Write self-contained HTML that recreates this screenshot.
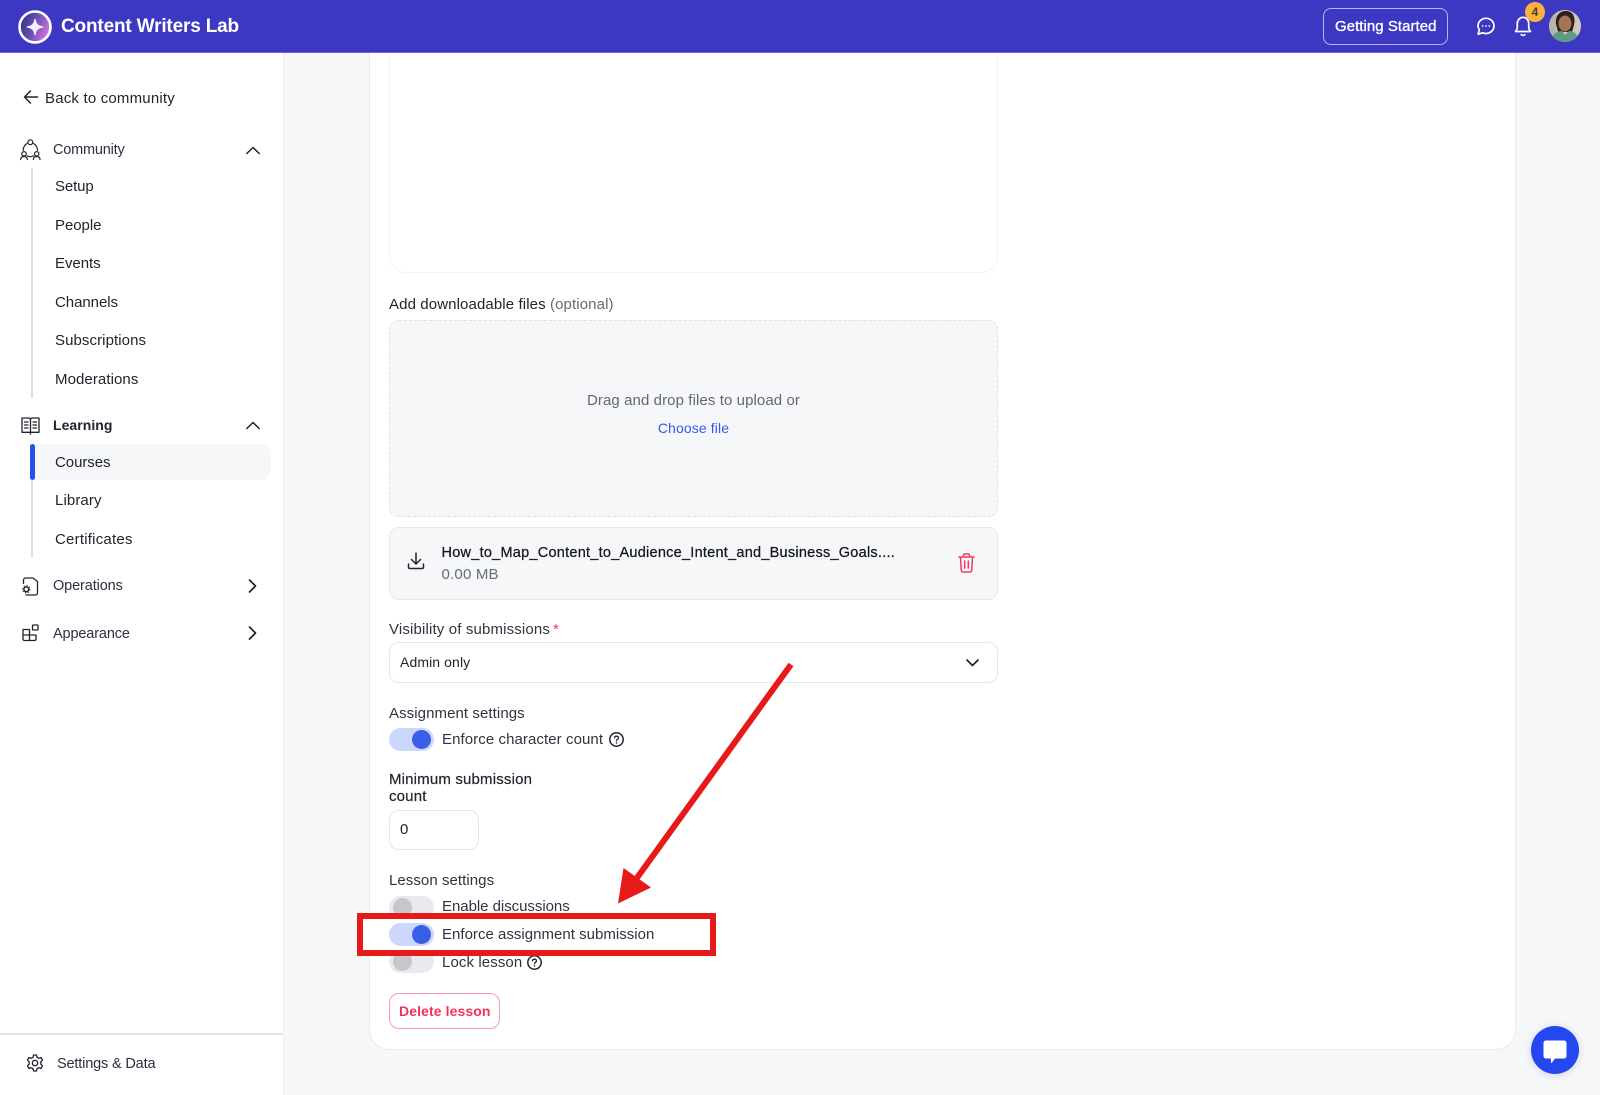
<!DOCTYPE html>
<html lang="en">
<head>
<meta charset="utf-8">
<title>Content Writers Lab</title>
<style>
html,body{margin:0;padding:0;width:1600px;height:1095px;overflow:hidden;background:#f6f7f9;font-family:"Liberation Sans",sans-serif;color:#20242e}
*{box-sizing:border-box}
.a{position:absolute}
.t{position:absolute;white-space:nowrap;transform:translateY(-50%);font-size:15px;line-height:18px;letter-spacing:0}
svg{position:absolute;overflow:visible}
.s{fill:none;stroke:#20242e;stroke-width:1.5;stroke-linecap:round;stroke-linejoin:round}
.w{fill:none;stroke:#fff;stroke-width:1.7;stroke-linecap:round;stroke-linejoin:round}
.tr{position:absolute;left:389px;width:45px;height:23px;border-radius:12px}
.on{background:#ccd7fd}.off{background:#e9eaee}
.k{position:absolute;top:2px;width:19px;height:19px;border-radius:50%}
.on .k{left:23px;background:#3a5fe6}.off .k{left:4px;background:#c6c7cd}
</style>
</head>
<body>
<!-- sidebar -->
<div class="a" style="left:0;top:53px;width:284px;height:1042px;background:#fff;border-right:1px solid #eceef1"></div>
<svg style="left:23px;top:89px" width="16" height="16" viewBox="0 0 16 16"><path class="s" d="M14.500 8H1.800M7.500 2 1.500 8 7.500 14"/></svg>
<div class="t" style="left:45px;top:98.500px;letter-spacing:.19px">Back to community</div>

<svg style="left:20px;top:139px" width="22" height="22" viewBox="0 0 22 22"><g class="s" style="stroke-width:1.200"><circle cx="10.300" cy="3.200" r="2.400"/><circle cx="4" cy="14.800" r="2.200"/><circle cx="16.700" cy="14.800" r="2.200"/><path d="M.7 20.500C.7 18.500 2 17.500 4 17.500S7.300 18.500 7.300 20.500M13.400 20.500C13.400 18.500 14.700 17.500 16.700 17.500S20 18.500 20 20.500M7 4.500C4.500 6 3 8.800 3.200 11.300M13.600 4.500C16 6 17.600 8.800 17.500 11.300M7.300 16.800C9 18 11.600 18 13.300 16.800"/></g></svg>
<div class="t" style="left:53px;top:150px;font-size:14.500px;letter-spacing:-.2px;color:#2b3040">Community</div>
<svg style="left:246px;top:146px" width="14" height="9" viewBox="0 0 14 9"><path class="s" d="M.8 7.500 7 1.500 13.200 7.500"/></svg>

<div class="a" style="left:30.500px;top:168px;width:2px;height:230px;background:#dedcdc"></div>
<div class="t" style="left:55px;top:186.500px;letter-spacing:-.11px">Setup</div>
<div class="t" style="left:55px;top:226px;letter-spacing:-.05px">People</div>
<div class="t" style="left:55px;top:263.500px;letter-spacing:-.05px">Events</div>
<div class="t" style="left:55px;top:302.500px;letter-spacing:-.05px">Channels</div>
<div class="t" style="left:55px;top:340.500px;letter-spacing:.08px">Subscriptions</div>
<div class="t" style="left:55px;top:380px;letter-spacing:.08px">Moderations</div>

<svg style="left:21px;top:417px" width="19" height="18" viewBox="0 0 19 18"><path class="s" style="stroke-width:1.300" d="M9.500 15.300H1V1H7.500C8.700 1 9.500 1.800 9.500 3 9.500 1.800 10.300 1 11.500 1H18V15.300H9.500V17M9.500 3V15.300M3.500 5H7M3.500 8H7M3.500 11H7M12 5H15.500M12 8H15.500M12 11H15.500"/></svg>
<div class="t" style="left:53px;top:425px;font-size:14px;font-weight:700;letter-spacing:.04px">Learning</div>
<svg style="left:246px;top:421px" width="14" height="9" viewBox="0 0 14 9"><path class="s" d="M.8 7.500 7 1.500 13.200 7.500"/></svg>

<div class="a" style="left:30.500px;top:444px;width:2px;height:113px;background:#dedcdc"></div>
<div class="a" style="left:30px;top:444px;width:241px;height:36px;background:#f6f7f9;border-radius:0 10px 10px 0"></div>
<div class="a" style="left:30px;top:444px;width:4.500px;height:36px;background:#2451ea;border-radius:3px"></div>
<div class="t" style="left:55px;top:462.500px;letter-spacing:-.05px">Courses</div>
<div class="t" style="left:55px;top:501px;letter-spacing:.1px">Library</div>
<div class="t" style="left:55px;top:539.500px;letter-spacing:.22px">Certificates</div>

<svg style="left:22px;top:577px" width="17" height="19" viewBox="0 0 17 19"><path class="s" style="stroke-width:1.300" d="M1.500 6.500V3C1.500 1.900 2.400 1 3.500 1H11L15.500 4.500V16C15.500 17.100 14.600 18 13.500 18H4"/><circle cx="4.300" cy="12.300" r="2.400" fill="none" stroke="#20242e" stroke-width="1.500"/><circle cx="4.300" cy="12.300" r="3.700" fill="none" stroke="#20242e" stroke-width="1" stroke-dasharray="1.300 1.600"/></svg>
<div class="t" style="left:53px;top:586px;font-size:14.500px;letter-spacing:-.12px;color:#2b3040">Operations</div>
<svg style="left:248px;top:579px" width="9" height="14" viewBox="0 0 9 14"><path class="s" style="stroke-width:1.700" d="M1.500 1 7.500 7 1.500 13"/></svg>

<svg style="left:22px;top:624px" width="17" height="17" viewBox="0 0 17 17"><path class="s" style="stroke-width:1.300" d="M1 5.500H7.500V16.500H2.500C1.600 16.500 1 15.900 1 15ZM1 11H14V15C14 15.900 13.400 16.500 12.500 16.500H7.500"/><rect class="s" style="stroke-width:1.300" x="10.500" y="1" width="5.500" height="5" rx=".8"/></svg>
<div class="t" style="left:53px;top:633.500px;font-size:14.500px;letter-spacing:-.14px;color:#2b3040">Appearance</div>
<svg style="left:248px;top:626px" width="9" height="14" viewBox="0 0 9 14"><path class="s" style="stroke-width:1.700" d="M1.500 1 7.500 7 1.500 13"/></svg>

<div class="a" style="left:0;top:1033px;width:283px;height:1.500px;background:#e4e5e8"></div>
<svg style="left:25.500px;top:1054px" width="18" height="18" viewBox="0 0 18 18"><path class="s" style="stroke-width:1.300" d="M7.500 1H10.500L11 3.300 12.800 4.300 15 3.500 16.500 6.200 14.800 7.800V10.200L16.500 11.800 15 14.500 12.800 13.700 11 14.700 10.500 17H7.500L7 14.700 5.200 13.700 3 14.500 1.500 11.800 3.200 10.200V7.800L1.500 6.200 3 3.500 5.200 4.300 7 3.300Z"/><circle class="s" style="stroke-width:1.300" cx="9" cy="9" r="2.700"/></svg>
<div class="t" style="left:57px;top:1064px;font-size:14.500px;letter-spacing:-.16px;color:#2b3040">Settings &amp; Data</div>

<!-- card -->
<div class="a" style="left:369px;top:53px;width:1147px;height:997px;background:#fff;border:1px solid #e9eaed;border-top:0;border-radius:0 0 20px 20px"></div>
<div class="a" style="left:389px;top:53px;width:609px;height:220px;border:1px solid #f2f3f5;border-top:0;border-radius:0 0 17px 17px"></div>

<div class="t" style="left:389px;top:304.500px;letter-spacing:.11px">Add downloadable files <span style="color:#666b75">(optional)</span></div>
<div class="a" style="left:389px;top:319.500px;width:609px;height:197px;background:#f6f7f9;border:1px dashed #dfe0e4;border-radius:10px"></div>
<div class="t" style="left:389px;width:609px;text-align:center;top:400.500px;letter-spacing:.09px;color:#626772">Drag and drop files to upload or</div>
<div class="t" style="left:389px;width:609px;text-align:center;top:428px;font-size:14px;letter-spacing:.12px;color:#3358f0">Choose file</div>

<div class="a" style="left:389px;top:526.500px;width:609px;height:73px;background:#f6f7f9;border:1px solid #e6e7ea;border-radius:10px"></div>
<svg style="left:406px;top:552px" width="20" height="18" viewBox="0 0 20 18"><path class="s" d="M10 1V11.500M5.500 7.500 10 12 14.500 7.500M2.500 12V15C2.500 16 3 16.500 4 16.500H16C17 16.500 17.500 16 17.500 15V12"/></svg>
<div class="t" style="left:441.500px;top:552.500px;font-size:14.500px;letter-spacing:.25px;color:#14171f;-webkit-text-stroke:.25px #14171f">How_to_Map_Content_to_Audience_Intent_and_Business_Goals....</div>
<div class="t" style="left:441.500px;top:575px;letter-spacing:.2px;color:#676c76">0.00 MB</div>
<svg style="left:958px;top:553px" width="17" height="20" viewBox="0 0 17 20"><path fill="none" stroke="#f4395f" stroke-width="1.500" stroke-linecap="round" stroke-linejoin="round" d="M1 4H16M5.500 4V2.500C5.500 1.600 6 1 7 1H10C11 1 11.500 1.600 11.500 2.500V4M2.500 4 3.200 17C3.300 18.200 4 19 5 19H12C13 19 13.700 18.200 13.800 17L14.500 4M6.700 8V15M10.300 8V15"/></svg>

<div class="t" style="left:389px;top:629.500px;letter-spacing:.15px;color:#30343f">Visibility of submissions<span style="color:#f4395f;margin-left:3px">*</span></div>
<div class="a" style="left:389px;top:642px;width:609px;height:41px;background:#fff;border:1px solid #e6e7ea;border-radius:10px"></div>
<div class="t" style="left:400px;top:662px;font-size:14px;letter-spacing:.1px">Admin only</div>
<svg style="left:966px;top:659px" width="13" height="8" viewBox="0 0 13 8"><path class="s" style="stroke-width:1.700" d="M1 1 6.500 6.500 12 1"/></svg>

<div class="t" style="left:389px;top:713.500px;letter-spacing:.08px;color:#30343f">Assignment settings</div>
<div class="tr on" style="top:728px"><div class="k"></div></div>
<div class="t" style="left:442px;top:739.500px;letter-spacing:.08px;color:#30343f">Enforce character count</div>
<svg style="left:608.500px;top:731.500px" width="15" height="15" viewBox="0 0 15 15"><circle class="s" cx="7.500" cy="7.500" r="6.700"/><path class="s" style="stroke-width:1.300" d="M5.500 5.900C5.500 4.800 6.400 4.200 7.500 4.200S9.500 4.900 9.500 5.900C9.500 7.300 7.500 7.300 7.500 8.800"/><circle cx="7.500" cy="10.900" r=".8" fill="#20242e"/></svg>

<div class="t" style="left:389px;top:779.500px;letter-spacing:.17px;-webkit-text-stroke:.2px #20242e">Minimum submission</div>
<div class="t" style="left:389px;top:796.500px;letter-spacing:.17px;-webkit-text-stroke:.2px #20242e">count</div>
<div class="a" style="left:389px;top:810px;width:90px;height:40px;background:#fff;border:1px solid #e6e7ea;border-radius:10px"></div>
<div class="t" style="left:400px;top:830px">0</div>

<div class="t" style="left:389px;top:880.500px;letter-spacing:.06px;color:#30343f">Lesson settings</div>
<div class="tr off" style="top:895.500px"><div class="k"></div></div>
<div class="t" style="left:442px;top:907px;letter-spacing:-.04px;color:#30343f">Enable discussions</div>
<div class="tr off" style="top:950px"><div class="k"></div></div>
<div class="t" style="left:442px;top:962.500px;letter-spacing:.1px;color:#30343f">Lock lesson</div>
<svg style="left:527px;top:954.500px" width="15" height="15" viewBox="0 0 15 15"><circle class="s" cx="7.500" cy="7.500" r="6.700"/><path class="s" style="stroke-width:1.300" d="M5.500 5.900C5.500 4.800 6.400 4.200 7.500 4.200S9.500 4.900 9.500 5.900C9.500 7.300 7.500 7.300 7.500 8.800"/><circle cx="7.500" cy="10.900" r=".8" fill="#20242e"/></svg>

<!-- annotation rectangle -->
<div class="a" style="left:356.500px;top:912.500px;width:359.500px;height:43.500px;background:#fff;border:6px solid #e71a1a"></div>
<div class="tr on" style="top:923px"><div class="k"></div></div>
<div class="t" style="left:442px;top:934.500px;letter-spacing:.02px;color:#30343f">Enforce assignment submission</div>

<div class="a" style="left:389px;top:993px;width:111px;height:36px;background:#fff;border:1px solid #fb9aac;border-radius:10px"></div>
<div class="t" style="left:399px;top:1011px;font-size:14px;font-weight:700;letter-spacing:.1px;color:#f6305b">Delete lesson</div>

<!-- annotation arrow -->
<svg style="left:0;top:0" width="1600" height="1095" viewBox="0 0 1600 1095"><path d="M791 664.500 634 882" fill="none" stroke="#e71a1a" stroke-width="6"/><path d="M618 903.500 623.500 868 651 887.500Z" fill="#e71a1a"/></svg>

<!-- header -->
<div class="a" style="left:0;top:0;width:1600px;height:53px;background:#3d38c1;border-bottom:1px solid #6a66d4"></div>
<svg style="left:17.500px;top:9.500px" width="34" height="34" viewBox="0 0 34 34">
<defs><linearGradient id="g" x1="0" y1="0" x2="1" y2="0.4"><stop offset="0" stop-color="#23307f"/><stop offset=".55" stop-color="#6a4cb8"/><stop offset="1" stop-color="#c873d8"/></linearGradient></defs>
<circle cx="17" cy="17" r="15.500" fill="url(#g)" stroke="#fff" stroke-width="2.600"/>
<path d="M17 9.500C17.700 14.200 19.800 16.300 24.500 17 19.800 17.700 17.700 19.800 17 24.500 16.300 19.800 14.200 17.700 9.500 17 14.200 16.300 16.300 14.200 17 9.500Z" fill="#f2f0ff" stroke="#f2f0ff" stroke-width="1.500" stroke-linejoin="round"/>
</svg>
<div class="t" style="left:61px;top:27px;font-size:19px;font-weight:700;color:#fff;letter-spacing:-.17px">Content Writers Lab</div>
<div class="a" style="left:1323px;top:8px;width:125px;height:37px;border:1px solid #b9b7ea;border-radius:8px"></div>
<div class="t" style="left:1335px;top:26.500px;font-size:15px;color:#fff;letter-spacing:.04px;-webkit-text-stroke:.35px #fff">Getting Started</div>
<svg style="left:1476px;top:16px" width="20" height="20" viewBox="0 0 20 20"><path class="w" d="M2.200 18.200 3.300 13.700C2.500 12.500 2 11.200 2 9.900 2 5.700 5.600 2.300 10 2.300S18 5.700 18 9.900 14.400 17.500 10 17.500C8.800 17.500 7.700 17.200 6.600 16.800Z"/><circle cx="6.700" cy="10" r=".9" fill="#fff"/><circle cx="10" cy="10" r=".9" fill="#fff"/><circle cx="13.300" cy="10" r=".9" fill="#fff"/></svg>
<svg style="left:1513px;top:15px" width="20" height="22" viewBox="0 0 20 22"><path class="w" d="M2.500 16.500C3.800 15 4.300 13.700 4.300 11.500V8.500C4.300 5.200 6.800 2.300 10 2.300S15.700 5.200 15.700 8.500V11.500C15.700 13.700 16.200 15 17.500 16.500ZM8.300 19.700C9.200 20.500 10.800 20.500 11.700 19.700"/></svg>
<div class="a" style="left:1525px;top:2px;width:20px;height:20px;border-radius:50%;background:#fbb03f"></div>
<div class="t" style="left:1525px;top:12px;width:20px;text-align:center;font-size:12px;font-weight:700;color:#4a3a20;letter-spacing:0">4</div>
<svg style="left:1549px;top:10px" width="32" height="32" viewBox="0 0 32 32">
<defs><clipPath id="av"><circle cx="16" cy="16" r="16"/></clipPath></defs>
<g clip-path="url(#av)"><rect width="32" height="32" fill="#cfc8bd"/><rect x="0" width="7" height="32" fill="#b8b3a8"/><path d="M7 14C6 5 11 1 17 1S27 6 25 15L23 22H9Z" fill="#2c211c"/><ellipse cx="16" cy="13.500" rx="6.500" ry="8" fill="#a57458"/><path d="M2 32C3 24 8 21 13 21L16 25 20 21C25 21 29 24 30 32Z" fill="#5f9a87"/></g></svg>

<!-- chat bubble -->
<div class="a" style="left:1531px;top:1026px;width:48px;height:48px;border-radius:50%;background:#2447f0;box-shadow:0 1px 8px rgba(30,50,120,.18)"></div>
<svg style="left:1543px;top:1040px" width="24" height="24" viewBox="0 0 24 24"><path d="M3 .5H21C22.400.5 23.500 1.600 23.500 3V16C23.500 17.400 22.400 18.500 21 18.500H12L8.300 23.500 7.700 18.500H3C1.600 18.500.5 17.400.5 16V3C.5 1.600 1.600.5 3 .5Z" fill="#fff"/></svg>
</body>
</html>
